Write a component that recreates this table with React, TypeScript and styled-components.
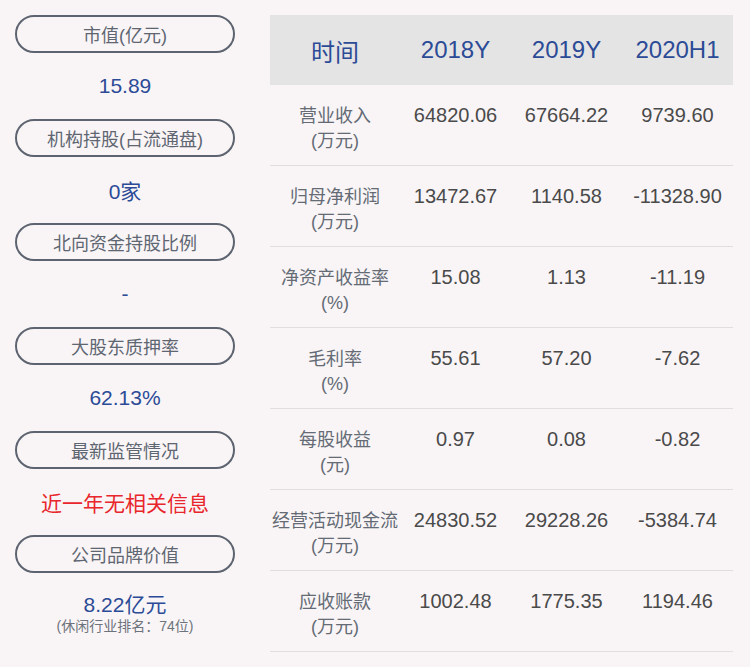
import styled, { createGlobalStyle } from "styled-components";

const GlobalStyle = createGlobalStyle`
  html, body {
    margin: 0;
    padding: 0;
    background: #f9f5f6;
  }
  body {
    font-family: "Liberation Sans", "Noto Sans CJK SC", sans-serif;
  }
`;

const Page = styled.div`
  width: 750px;
  height: 667px;
  box-sizing: border-box;
  padding: 15px 17px 0 15px;
  display: flex;
  gap: 35px;
  background: #f9f5f6;
`;

const Side = styled.div`
  width: 220px;
  display: flex;
  flex-direction: column;
`;

const Pill = styled.div`
  height: 38px;
  box-sizing: border-box;
  border: 2px solid #5d6470;
  border-radius: 19px;
  display: flex;
  align-items: center;
  justify-content: center;
  font-size: 18px;
  color: #5e6672;
`;

const Value = styled.div<{ $red?: boolean }>`
  height: 66px;
  display: flex;
  flex-direction: column;
  align-items: center;
  justify-content: center;
  font-size: 21px;
  color: ${(p) => (p.$red ? "#e8262b" : "#2c4b96")};
`;

const LastValue = styled.div`
  display: flex;
  flex-direction: column;
  align-items: center;
  padding-top: 20px;
  font-size: 21px;
  line-height: 24px;
  color: #2c4b96;
`;

const Note = styled.span`
  font-size: 14px;
  line-height: 18px;
  color: #6d737c;
`;

const Table = styled.div`
  flex: 1;
  display: flex;
  flex-direction: column;
`;

const Row = styled.div<{ $head?: boolean }>`
  display: grid;
  grid-template-columns: 130px 111px 111px 111px;
  height: ${(p) => (p.$head ? "70px" : "80px")};
  align-items: ${(p) => (p.$head ? "center" : "start")};
  background: ${(p) => (p.$head ? "#e5e4e5" : "transparent")};
  border-bottom: ${(p) => (p.$head ? "none" : "1px solid #e2dedf")};
`;

const HeadCell = styled.div`
  text-align: center;
  font-size: 24px;
  color: #2c4b96;
`;

const Label = styled.div`
  text-align: center;
  padding-top: 19px;
  font-size: 18px;
  line-height: 25px;
  color: #646b75;
`;

const Num = styled.div`
  text-align: center;
  padding-top: 18px;
  font-size: 20px;
  line-height: 25px;
  color: #4a4a4a;
`;

const sideItems = [
  { label: "市值(亿元)", value: "15.89" },
  { label: "机构持股(占流通盘)", value: "0家" },
  { label: "北向资金持股比例", value: "-" },
  { label: "大股东质押率", value: "62.13%" },
  { label: "最新监管情况", value: "近一年无相关信息", red: true },
];

const rows = [
  { name: "营业收入", unit: "(万元)", vals: ["64820.06", "67664.22", "9739.60"] },
  { name: "归母净利润", unit: "(万元)", vals: ["13472.67", "1140.58", "-11328.90"] },
  { name: "净资产收益率", unit: "(%)", vals: ["15.08", "1.13", "-11.19"] },
  { name: "毛利率", unit: "(%)", vals: ["55.61", "57.20", "-7.62"] },
  { name: "每股收益", unit: "(元)", vals: ["0.97", "0.08", "-0.82"] },
  { name: "经营活动现金流", unit: "(万元)", vals: ["24830.52", "29228.26", "-5384.74"] },
  { name: "应收账款", unit: "(万元)", vals: ["1002.48", "1775.35", "1194.46"] },
];

export default function App() {
  return (
    <>
      <GlobalStyle />
      <Page>
        <Side>
          {sideItems.map((item) => (
            <div key={item.label}>
              <Pill>{item.label}</Pill>
              <Value $red={item.red}>{item.value}</Value>
            </div>
          ))}
          <Pill>公司品牌价值</Pill>
          <LastValue>
            8.22亿元
            <Note>(休闲行业排名：74位)</Note>
          </LastValue>
        </Side>
        <Table>
          <Row $head>
            <HeadCell>时间</HeadCell>
            <HeadCell>2018Y</HeadCell>
            <HeadCell>2019Y</HeadCell>
            <HeadCell>2020H1</HeadCell>
          </Row>
          {rows.map((r) => (
            <Row key={r.name}>
              <Label>
                {r.name}
                <br />
                {r.unit}
              </Label>
              {r.vals.map((v, i) => (
                <Num key={i}>{v}</Num>
              ))}
            </Row>
          ))}
        </Table>
      </Page>
    </>
  );
}
